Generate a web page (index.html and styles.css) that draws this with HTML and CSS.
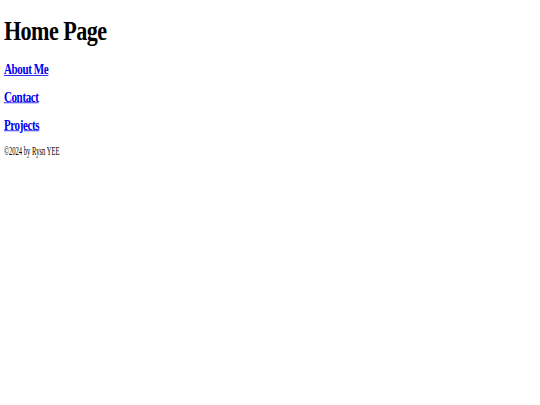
FILE: index.html
```html
<!DOCTYPE html>
<html lang="en">
<head>
<meta charset="utf-8">
<title>Home Page</title>
<link rel="stylesheet" href="styles.css">
</head>
<body>
<div class="page">
  <h1 class="title">Home Page</h1>
  <nav class="links">
    <p class="nav-item"><a href="#about">About Me</a></p>
    <p class="nav-item"><a href="#contact">Contact</a></p>
    <p class="nav-item"><a href="#projects">Projects</a></p>
  </nav>
  <footer class="footer"><span class="copy">©2024 by Rysn YEE</span></footer>
</div>
</body>
</html>
```

FILE: styles.css
```css
html, body {
  margin: 0;
  padding: 0;
  background: #fff;
}

.page {
  font-family: "Liberation Serif", "Times New Roman", serif;
  color: #000;
  padding: 8px 6px;
  transform: scale(0.65, 0.8);
  transform-origin: 0 0;
}

.title {
  font-size: 34px;
  font-weight: bold;
  letter-spacing: -0.8px;
  margin: 10.5px 0 20px;
  line-height: 1.15;
}

.links {
  display: flex;
  flex-direction: column;
}

.nav-item {
  margin: 0 0 15px;
  font-size: 17px;
  font-weight: bold;
  letter-spacing: -0.6px;
  line-height: 1.15;
}

.nav-item a {
  color: #0000ee;
  text-decoration: underline;
}

.footer {
  font-size: 14.5px;
  line-height: 1.15;
}

.copy {
  display: inline-block;
  transform: scaleX(0.7);
  transform-origin: 0 0;
}
```
